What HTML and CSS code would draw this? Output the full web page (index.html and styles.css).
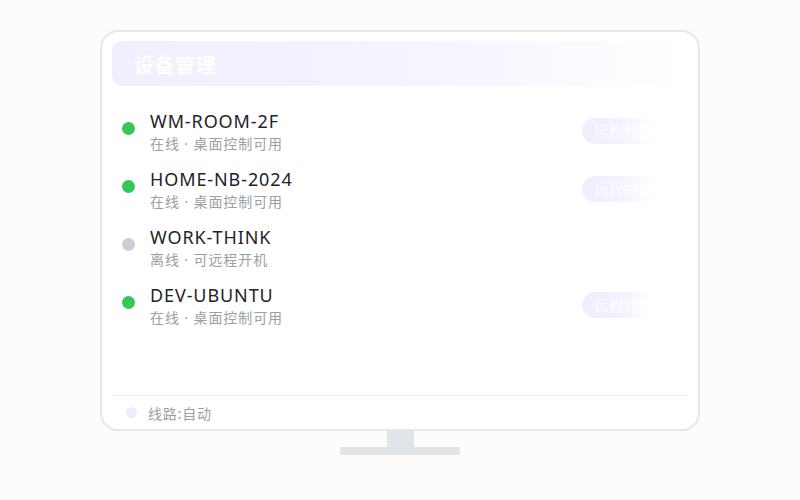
FILE: index.html
```html
<!DOCTYPE html>
<html lang="zh">
<head>
<meta charset="utf-8">
<link rel="stylesheet" href="styles.css">
</head>
<body>
<div class="scene">
  <div class="monitor">
    <div class="header"><span class="title">设备管理</span></div>
    <div class="list">
      <div class="row">
        <span class="dot on"></span>
        <div class="info">
          <div class="name">WM-ROOM-2F</div>
          <div class="sub">在线 · 桌面控制可用</div>
        </div>
        <span class="btn">远程控制</span>
      </div>
      <div class="row">
        <span class="dot on"></span>
        <div class="info">
          <div class="name">HOME-NB-2024</div>
          <div class="sub">在线 · 桌面控制可用</div>
        </div>
        <span class="btn">远程控制</span>
      </div>
      <div class="row">
        <span class="dot off"></span>
        <div class="info">
          <div class="name">WORK-THINK</div>
          <div class="sub">离线 · 可远程开机</div>
        </div>
      </div>
      <div class="row">
        <span class="dot on"></span>
        <div class="info">
          <div class="name">DEV-UBUNTU</div>
          <div class="sub">在线 · 桌面控制可用</div>
        </div>
        <span class="btn">远程控制</span>
      </div>
    </div>
    <div class="footer">
      <span class="fdot"></span>
      <span class="ftext">线路:自动</span>
    </div>
  </div>
  <div class="neck"></div>
  <div class="base"></div>
</div>
</body>
</html>
```
FILE: styles.css
```css
html, body {
  margin: 0;
  padding: 0;
  background: #fcfcfd;
  font-family: "Noto Sans", "Noto Sans CJK SC", sans-serif;
}
.scene {
  width: 800px;
  height: 500px;
  display: flex;
  flex-direction: column;
  align-items: center;
}
.monitor {
  margin-top: 30px;
  width: 600px;
  height: 401px;
  box-sizing: border-box;
  border: 2px solid #e5e7eb;
  border-radius: 18px;
  background: #ffffff;
  padding: 9px 10px 0;
  display: flex;
  flex-direction: column;
}
.header {
  height: 45px;
  border-radius: 10px;
  background: linear-gradient(90deg, #f1eeff 0%, #f5f3ff 50%, rgba(255,255,255,0) 100%);
  display: flex;
  align-items: center;
  padding-left: 22px;
  padding-top: 2px;
  box-sizing: border-box;
}
.title {
  color: #ffffff;
  font-family: "Noto Sans CJK SC", sans-serif;
  font-weight: 700;
  font-size: 20px;
  letter-spacing: 0.5px;
}
.list {
  margin-top: 23px;
  display: flex;
  flex-direction: column;
  gap: 14px;
}
.row {
  display: flex;
  align-items: flex-start;
  padding-left: 10px;
  height: 44px;
}
.dot {
  width: 13px;
  height: 13px;
  border-radius: 50%;
  margin-top: 13px;
  margin-right: 15px;
  flex: none;
}
.dot.on { background: #34c759; }
.dot.off { background: #c9ced6; }
.info { flex: 1; }
.name {
  font-size: 18px;
  line-height: 24px;
  color: #1f2329;
  letter-spacing: 0.9px;
}
.sub {
  font-family: "Noto Sans", "Noto Sans CJK SC", sans-serif;
  font-size: 14px;
  line-height: 21px;
  color: #9aa0a8;
  letter-spacing: 0.9px;
}
.btn {
  align-self: center;
  margin-right: 26px;
  width: 80px;
  height: 26px;
  border-radius: 13px;
  background: linear-gradient(90deg, #efecff 0%, #f4f2ff 50%, rgba(255,255,255,0) 100%);
  color: #ffffff;
  font-family: "Noto Serif CJK SC", serif;
  font-size: 15px;
  line-height: 26px;
  padding-left: 12px;
  box-sizing: border-box;
  white-space: nowrap;
  overflow: hidden;
  -webkit-mask-image: linear-gradient(90deg, #000 60%, transparent 100%);
  mask-image: linear-gradient(90deg, #000 60%, transparent 100%);
}
.footer {
  margin-top: auto;
  border-top: 1px solid #eef0f3;
  display: flex;
  align-items: center;
  height: 34px;
  padding-left: 14px;
  box-sizing: border-box;
}
.fdot {
  width: 11px;
  height: 11px;
  border-radius: 50%;
  background: #efebfe;
  margin-right: 11px;
}
.ftext {
  font-family: "Noto Sans CJK SC", sans-serif;
  font-size: 14px;
  color: #9aa0a8;
  letter-spacing: 0.8px;
}
.neck {
  width: 27px;
  height: 16px;
  background: #e1e4e8;
}
.base {
  width: 120px;
  height: 8px;
  background: #e1e4e8;
}
```
